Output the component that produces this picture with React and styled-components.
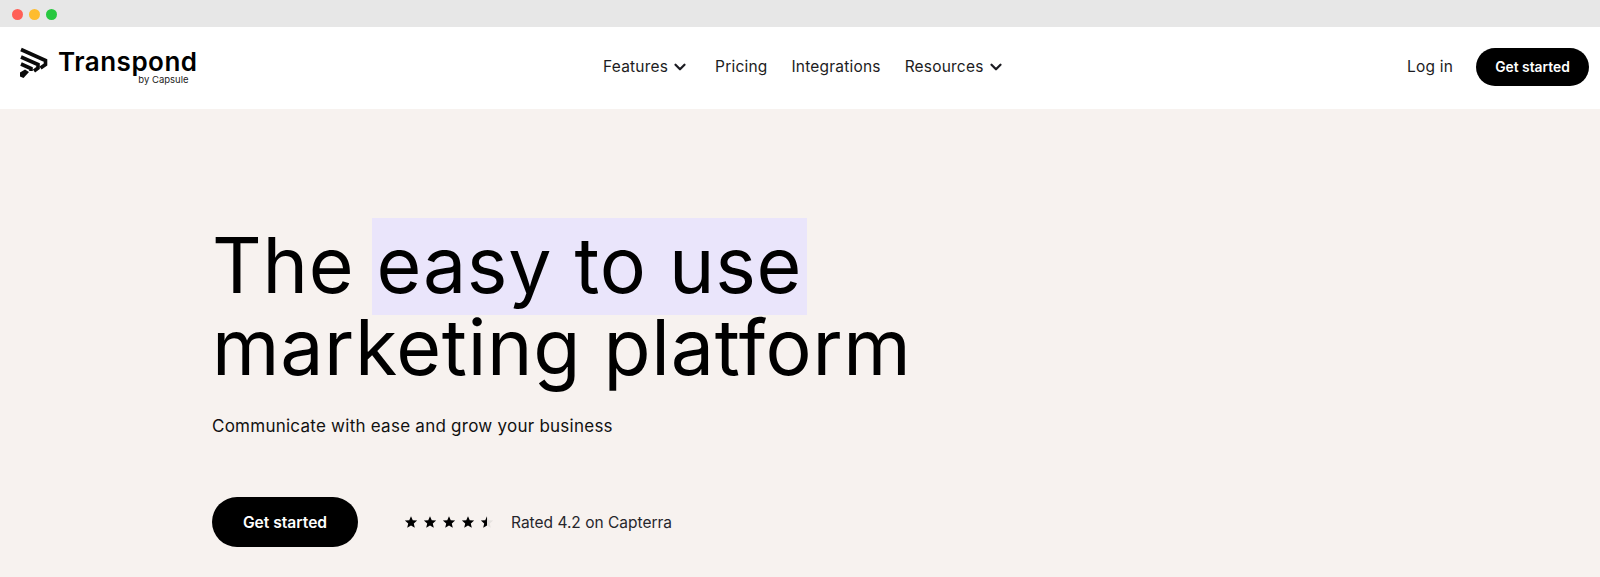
import React from "react";
import styled, { createGlobalStyle } from "styled-components";
import { ChevronDown } from "lucide-react";

const GlobalStyle = createGlobalStyle`
  html, body {
    margin: 0;
    padding: 0;
    background: #f7f2ef;
  }
  body {
    font-family: "Inter", "Liberation Sans", sans-serif;
    color: #0b0b0b;
  }
`;

const Page = styled.div`
  width: 1600px;
  height: 577px;
  overflow: hidden;
  display: flex;
  flex-direction: column;
`;

const WindowBar = styled.div`
  height: 27px;
  background: #e7e7e7;
  display: flex;
  align-items: center;
  gap: 6px;
  padding: 1px 0 0 11.5px;
  box-sizing: border-box;
`;

const Dot = styled.span`
  width: 11px;
  height: 11px;
  border-radius: 50%;
  background: ${(props) => props.color};
`;

const Header = styled.header`
  height: 82px;
  box-sizing: border-box;
  background: #fff;
  display: grid;
  grid-template-columns: 583px auto 1fr;
  align-items: center;
  padding: 0 11px 3px 20px;
`;

const Logo = styled.div`
  display: flex;
  align-items: flex-start;
  gap: 10px;
  height: 40px;
`;

const LogoName = styled.div`
  display: flex;
  flex-direction: column;
  align-items: flex-end;
`;

const LogoText = styled.span`
  font-size: 26px;
  font-weight: 600;
  line-height: 30px;
  letter-spacing: 0.5px;
  color: #000;
`;

const LogoSub = styled.span`
  font-size: 9.5px;
  line-height: 10px;
  margin-top: -1.5px;
  padding-right: 9px;
  color: #222;
`;

const Nav = styled.nav`
  display: flex;
  align-items: center;
  gap: 24px;
`;

const NavItem = styled.a`
  display: flex;
  align-items: center;
  gap: 3px;
  font-size: 15.5px;
  letter-spacing: 0.2px;
  color: #1c1c22;
  white-space: nowrap;

  svg {
    margin-right: 2px;
  }
`;

const Actions = styled.div`
  display: flex;
  justify-content: flex-end;
  align-items: center;
  gap: 23px;
`;

const Button = styled.button`
  border: 0;
  background: #000;
  color: #fff;
  font-family: inherit;
  font-weight: 600;
  font-size: ${(props) => (props.$large ? "15.6px" : "13.8px")};
  width: ${(props) => (props.$large ? "146px" : "113px")};
  height: ${(props) => (props.$large ? "50px" : "38px")};
  border-radius: ${(props) => (props.$large ? "25px" : "19px")};
`;

const Hero = styled.main`
  flex: 1;
  padding: 115px 0 0 212px;
  display: flex;
  flex-direction: column;
  align-items: flex-start;
`;

const Title = styled.h1`
  margin: 0;
  font-size: 77px;
  font-weight: 400;
  line-height: 82px;
  letter-spacing: 0.7px;
  color: #000;
  white-space: nowrap;
`;

const Mark = styled.span`
  background: #eae5fb;
  padding: 0 5px 3px;
  margin-left: -5px;
`;

const Lead = styled.p`
  margin: 26px 0 0;
  font-size: 17px;
  line-height: 24px;
  letter-spacing: 0.25px;
  color: #111;
`;

const CtaRow = styled.div`
  display: flex;
  align-items: center;
  margin-top: 59px;
`;

const Rating = styled.div`
  display: flex;
  align-items: center;
  margin-left: 46px;
  font-size: 15.5px;
  color: #26262c;
  gap: 17px;
`;

const Stars = styled.div`
  display: flex;
  gap: 5px;
`;

const Star = ({ half }) => (
  <svg width="14" height="14" viewBox="0 0 24 24">
    {half && (
      <path
        d="M12 2l3 6.9 7.5.7-5.7 5 1.7 7.4L12 18l-6.5 4 1.7-7.4-5.7-5L9 8.9z"
        fill="#e6e2df"
      />
    )}
    <path
      d={
        half
          ? "M12 2v16l-6.5 4 1.7-7.4-5.7-5L9 8.9z"
          : "M12 2l3 6.9 7.5.7-5.7 5 1.7 7.4L12 18l-6.5 4 1.7-7.4-5.7-5L9 8.9z"
      }
      fill="#000"
    />
  </svg>
);

const LogoMark = () => (
  <svg width="28" height="32" viewBox="0 0 28 32">
    <g fill="none" stroke="#0a0a0a" strokeWidth="3.6" strokeLinejoin="miter">
      <path d="M1 2.5 L25.5 13.5 V17.5 L20.5 21" />
      <path d="M1 10 L18 17.5 V21 L14 24" />
      <path d="M1 17 L11 21.5 V24" />
    </g>
    <path d="M0 25.5 L5 22.5 L9 25 L3.5 31 L0 29.5 Z" fill="#0a0a0a" />
  </svg>
);

const App = () => (
  <Page>
    <GlobalStyle />
    <WindowBar>
      <Dot color="#ff5f57" />
      <Dot color="#febc2e" />
      <Dot color="#28c840" />
    </WindowBar>
    <Header>
      <Logo>
        <LogoMark />
        <LogoName>
          <LogoText>Transpond</LogoText>
          <LogoSub>by Capsule</LogoSub>
        </LogoName>
      </Logo>
      <Nav>
        <NavItem>
          Features <ChevronDown size={18} strokeWidth={3} />
        </NavItem>
        <NavItem>Pricing</NavItem>
        <NavItem>Integrations</NavItem>
        <NavItem>
          Resources <ChevronDown size={18} strokeWidth={3} />
        </NavItem>
      </Nav>
      <Actions>
        <NavItem>Log in</NavItem>
        <Button>Get started</Button>
      </Actions>
    </Header>
    <Hero>
      <Title>
        The <Mark>easy to use</Mark>
        <br />
        marketing platform
      </Title>
      <Lead>Communicate with ease and grow your business</Lead>
      <CtaRow>
        <Button $large>Get started</Button>
        <Rating>
          <Stars>
            <Star />
            <Star />
            <Star />
            <Star />
            <Star half />
          </Stars>
          Rated 4.2 on Capterra
        </Rating>
      </CtaRow>
    </Hero>
  </Page>
);

export default App;
